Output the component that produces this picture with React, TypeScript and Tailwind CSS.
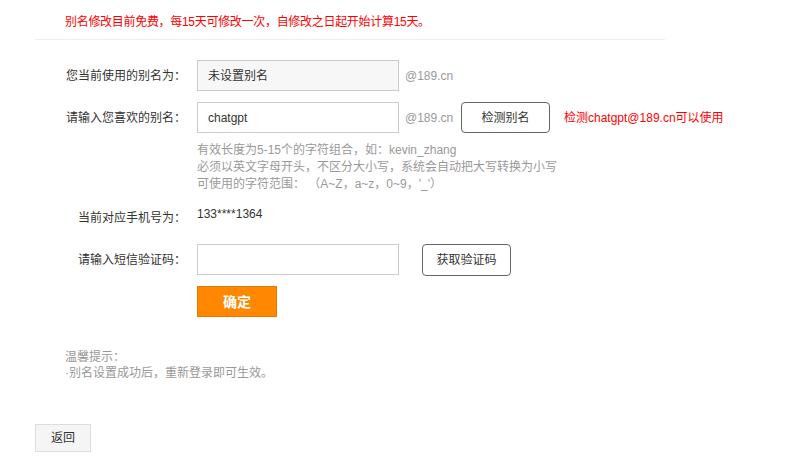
const labelCls = "w-[162px] shrink-0 pr-[11px] text-right";

const App = () => {
  return (
    <div className="w-[804px] h-[464px] bg-white text-[12px] leading-[18px] text-[#333] font-['Liberation_Sans','Noto_Sans_CJK_SC',sans-serif]">
      <div className="pl-[35px]">
        {/* notice */}
        <div className="w-[630px] h-[40px] border-b border-[#eee] pl-[30px] pt-[13px] text-[#ff0000] tracking-[-0.3px]">
          别名修改目前免费，每15天可修改一次，自修改之日起开始计算15天。
        </div>

        {/* current alias */}
        <div className="mt-[20px] flex items-center h-[31px]">
          <div className={labelCls}>您当前使用的别名为：</div>
          <div className="w-[202px] h-[31px] border border-[#ccc] bg-[#f7f7f7] pl-[10px] flex items-center">
            未设置别名
          </div>
          <span className="pl-[6px] text-[#999]">@189.cn</span>
        </div>

        {/* new alias */}
        <div className="mt-[11px] flex items-center h-[31px]">
          <div className={labelCls}>请输入您喜欢的别名：</div>
          <div className="w-[202px] h-[31px] border border-[#ccc] bg-white pl-[10px] flex items-center">
            chatgpt
          </div>
          <span className="w-[62px] pl-[6px] text-[#999]">@189.cn</span>
          <button className="w-[89px] h-[31px] border border-[#666] rounded-[4px] bg-white text-[#333]">
            检测别名
          </button>
          <span className="ml-[14px] text-[#ff0000]">检测chatgpt@189.cn可以使用</span>
        </div>

        {/* rules */}
        <div className="mt-[9px] pl-[162px] leading-[17px] text-[#999]">
          <p>有效长度为5-15个的字符组合，如：kevin_zhang</p>
          <p>必须以英文字母开头，不区分大小写，系统会自动把大写转换为小写</p>
          <p>可使用的字符范围：&nbsp;（A~Z，a~z，0~9，'_'）</p>
        </div>

        {/* phone */}
        <div className="mt-[12px] flex items-start">
          <div className={labelCls + " pt-[4px]"}>当前对应手机号为：</div>
          <div>133****1364</div>
        </div>

        {/* sms code */}
        <div className="mt-[17px] flex items-center h-[31px]">
          <div className={labelCls}>请输入短信验证码：</div>
          <div className="w-[202px] h-[31px] border border-[#ccc] bg-white" />
          <button className="ml-[23px] w-[89px] h-[32px] border border-[#666] rounded-[4px] bg-white text-[#333]">
            获取验证码
          </button>
        </div>

        <button className="mt-[11px] ml-[162px] w-[80px] h-[31px] bg-[#ff8800] border border-[#e67a00] text-white font-bold text-[14px]">
          确定
        </button>

        {/* tips */}
        <div className="mt-[32px] pl-[30px] leading-[16px] text-[#999]">
          <p>温馨提示：</p>
          <p>·别名设置成功后，重新登录即可生效。</p>
        </div>

        <button className="mt-[43px] w-[56px] h-[28px] border border-[#ddd] bg-[#f5f5f5] text-[#333]">
          返回
        </button>
      </div>
    </div>
  );
};

export default App;
